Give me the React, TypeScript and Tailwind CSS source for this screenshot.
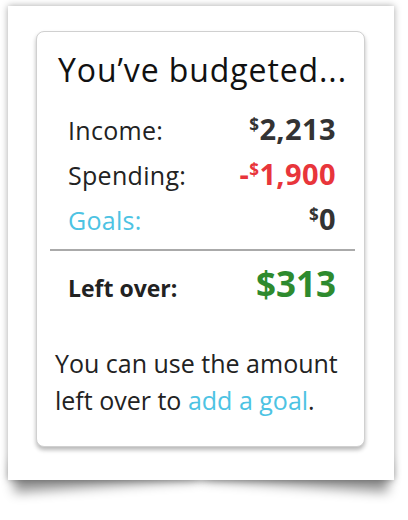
import React from 'react';

const ROWS = [
    { label: "Income:", labelColor: "text-[#222]", sign: "", amount: "2,213", color: "text-[#333]" },
    { label: "Spending:", labelColor: "text-[#222]", sign: "-", amount: "1,900", color: "text-[#e8353b]" },
    { label: "Goals:", labelColor: "text-[#4dc3e3]", sign: "", amount: "0", color: "text-[#333]" },
];

export default function App() {
    return (
        <div className="w-[408px] h-[520px] bg-white overflow-hidden font-['Open_Sans',sans-serif]">
            <div className="relative ml-[8px] mt-[6px] w-[386px] h-[474px]">
                {/* curled corner shadows */}
                <div className="absolute left-[4px] bottom-[12px] w-[48%] h-[30px] shadow-[0_18px_12px_rgba(0,0,0,0.42)] -rotate-[4deg]" />
                <div className="absolute right-[4px] bottom-[12px] w-[48%] h-[30px] shadow-[0_18px_12px_rgba(0,0,0,0.42)] rotate-[4deg]" />

                <div className="relative w-full h-full bg-white shadow-[0_0_7px_rgba(0,0,0,0.35)] pl-[28px] pt-[25px]">
                    <div className="w-[329px] h-[416px] bg-white rounded-[8px] border border-[#d0d0d0] shadow-[0_3px_4px_rgba(0,0,0,0.28)] pt-[20px]">
                        <h2 className="text-[32px] leading-[36px] tracking-[0.9px] text-[#111] text-center pl-[4px] whitespace-nowrap">
                            You’ve budgeted...
                        </h2>

                        <div className="mt-[18px] pl-[13px] pr-[9px]">
                            <div className="pl-[18px] pr-[19px]">
                                {ROWS.map((row) => (
                                    <div key={row.label} className="h-[45px] flex items-baseline justify-between leading-[45px]">
                                        <span className={`text-[25px] tracking-[0.3px] ${row.labelColor}`}>{row.label}</span>
                                        <span className={`text-[29px] font-bold tracking-[0.4px] ${row.color}`}>
                                            {row.sign}
                                            <span className="text-[17px] leading-none align-[0.55em]">$</span>
                                            {row.amount}
                                        </span>
                                    </div>
                                ))}
                            </div>

                            <div className="mt-[8px] h-[2px] bg-[#aaaaaa]" />

                            <div className="mt-[10px] h-[45px] pl-[18px] pr-[19px] flex items-baseline justify-between leading-[45px]">
                                <span className="text-[23px] font-bold text-[#222]">Left over:</span>
                                <span className="text-[35px] font-bold text-[#2e8a2e]">$313</span>
                            </div>
                        </div>

                        <p className="mt-[39px] pl-[18px] pr-[12px] text-[25px] leading-[37px] text-[#222]">
                            You can use the amount left over to{' '}
                            <span className="text-[#4dc3e3]">add a goal</span>.
                        </p>
                    </div>
                </div>
            </div>
        </div>
    );
}
